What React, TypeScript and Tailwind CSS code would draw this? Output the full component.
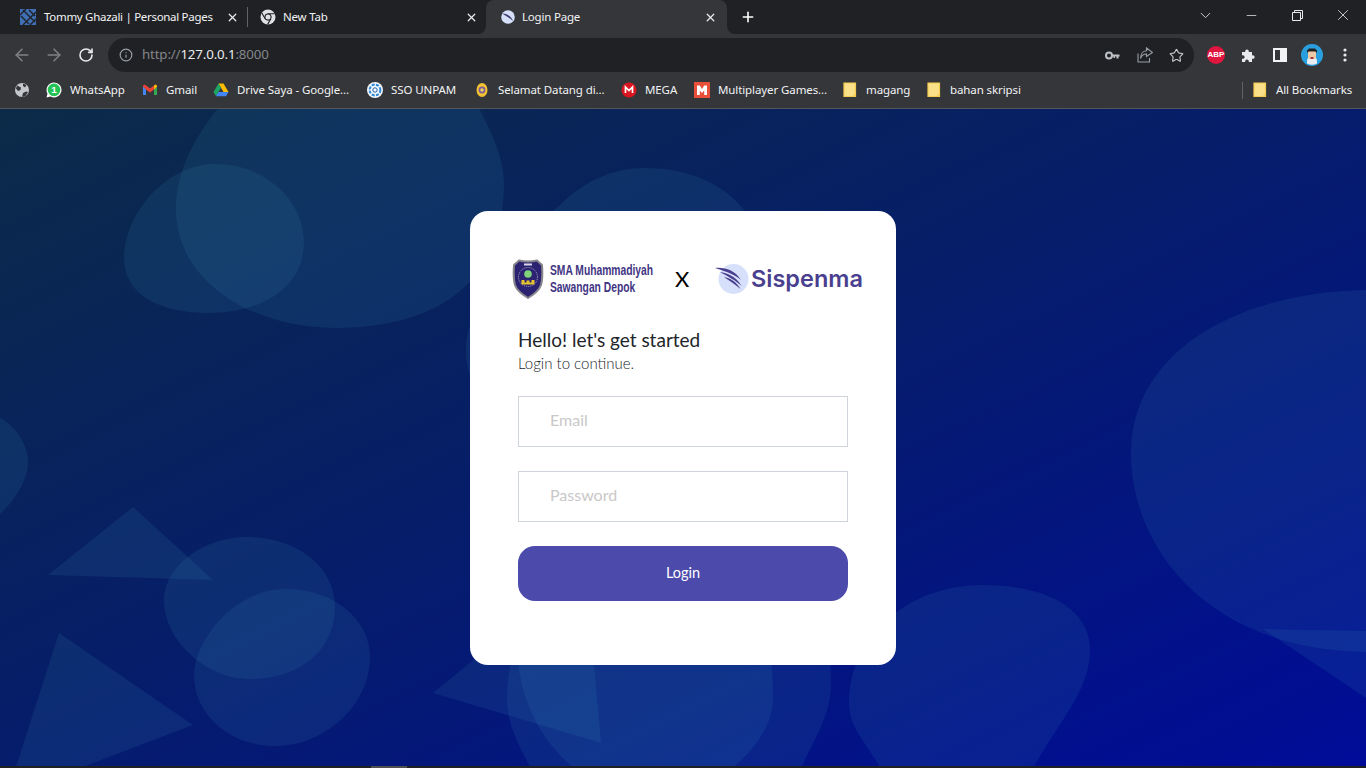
import React from "react";
import { ArrowLeft, ArrowRight, RotateCw, Info, Star, X, Plus, ChevronDown, Minus } from "lucide-react";

const Sep = () => <div className="w-px h-5 bg-[#5f6368]" />;

function TommyIcon() {
  return (
    <svg width="16" height="16" viewBox="0 0 16 16">
      <rect width="16" height="16" fill="#3f6fb5" />
      <path d="M0 6L6 0M3 16L16 3M10 16L16 10M3 1L15 13M9 1L15 7M1 7L9 15" stroke="#20242c" strokeWidth="1.5" />
    </svg>
  );
}
function ChromeIcon() {
  return (
    <svg width="16" height="16" viewBox="0 0 16 16">
      <circle cx="8" cy="8" r="7.5" fill="#dfe1e5" />
      <path d="M8 4.7h6.6M5.1 9.7L1.9 4.1M10.9 9.7L7.6 15.4" stroke="#202124" strokeWidth="1.1" />
      <circle cx="8" cy="8" r="3.2" fill="#202124" stroke="#202124" />
      <circle cx="8" cy="8" r="2.5" fill="#dfe1e5" />
    </svg>
  );
}
function WingFavicon() {
  return (
    <svg width="14" height="14" viewBox="0 0 14 14">
      <circle cx="7" cy="7" r="6.8" fill="#d6e0fb" />
      <path d="M1 3.5C5 3 10 6 12 11C9 8 5 6 1 3.5Z" fill="#3f3d6e" />
    </svg>
  );
}
function WhatsApp() {
  return (
    <svg width="18" height="18" viewBox="0 0 17 17">
      <path d="M8.5.4a8 8 0 0 0-6.900 12L.5 16.600l4.300-1.100A8 8 0 1 0 8.500.4Z" fill="#fff" />
      <circle cx="8.500" cy="8.400" r="6.700" fill="#25c256" />
      <text x="8.500" y="12.200" textAnchor="middle" fontSize="10.500" fontWeight="700" fill="#fff" fontFamily="Liberation Sans, sans-serif">1</text>
    </svg>
  );
}
function Gmail() {
  return (
    <svg width="16" height="16" viewBox="0 0 16 16">
      <path d="M1 4v9h3V7.500z" fill="#4285f4" />
      <path d="M12 7.500V13h3V4z" fill="#34a853" />
      <path d="M1 4.500C1 2.800 2.600 2.300 3.700 3.200L8 6.500l4.300-3.300c1.100-.9 2.700-.4 2.700 1.300l-3 3L8 10.500 4 7.500z" fill="#ea4335" />
      <path d="M12 7.500l3-3C15 2.800 13.400 2.300 12.300 3.200L12 3.500z" fill="#fbbc04" />
    </svg>
  );
}
function Drive() {
  return (
    <svg width="16" height="16" viewBox="0 0 16 16">
      <path d="M5.500 1.500h5L15.500 10h-5z" fill="#fbbc04" />
      <path d="M5.500 1.500L.5 10 3 14.300 8 5.800z" fill="#1fa463" />
      <path d="M3 14.300h10L15.500 10H5.500z" fill="#4285f4" />
    </svg>
  );
}
function Sso() {
  return (
    <svg width="16" height="16" viewBox="0 0 16 16">
      <circle cx="8" cy="8" r="8" fill="#f3f7fc" />
      <circle cx="8" cy="8" r="5.400" fill="none" stroke="#2c86d6" strokeWidth="2" strokeDasharray="3 1.300" />
      <circle cx="8" cy="8" r="2.200" fill="#fff" stroke="#1b5fa8" />
    </svg>
  );
}
function Selamat() {
  return (
    <svg width="16" height="16" viewBox="0 0 16 16">
      <ellipse cx="8" cy="8" rx="5.500" ry="7" fill="#f2c230" />
      <circle cx="8" cy="8" r="3.400" fill="#7d5a9e" />
      <circle cx="8" cy="8" r="1.800" fill="#e9d25a" />
    </svg>
  );
}
function Mega() {
  return (
    <svg width="16" height="16" viewBox="0 0 16 16">
      <circle cx="8" cy="8" r="7.500" fill="#d9161f" />
      <path d="M4.500 11V5l3.500 3.500L11.500 5v6" fill="none" stroke="#fff" strokeWidth="1.700" />
    </svg>
  );
}
function Multi() {
  return (
    <svg width="16" height="16" viewBox="0 0 16 16">
      <rect width="16" height="16" fill="#e8503a" />
      <path d="M3 3.500h2.800L8 7l2.200-3.500H13V13h-2.800V8.500L8 11 5.800 8.500V13H3z" fill="#fff" />
    </svg>
  );
}
function Note() {
  return (
    <svg width="14" height="16" viewBox="0 0 14 16">
      <path d="M1 1h11.500v13.500H1z" fill="#fbe08a" stroke="#f6cc4e" strokeWidth="1.200" />
      <rect x="10.500" y="12.500" width="2.500" height="2.500" fill="#f6cc4e" />
    </svg>
  );
}
function GlobeIcon() {
  return (
    <svg width="16" height="16" viewBox="0 0 16 16">
      <circle cx="8" cy="8" r="7" fill="#c4c7cc" />
      <path d="M3 3.500L7 5.500 6.500 8 4 9 2 6.500ZM8 15l1-4 3-1.500 2 .5-2.500 4ZM9 1.500L12.500 3 11 5.500 9 4Z" fill="#35363a" />
    </svg>
  );
}

function Tab({ icon, title, w, active }: { icon: React.ReactNode; title: string; w: string; active?: boolean }) {
  return (
    <div className={`${w} h-full flex items-center shrink-0 ${active ? "pl-[14px] pr-[10px]" : "pl-[20px] pr-[8px]"}`}>
      <span className="w-4 flex justify-center shrink-0">{icon}</span>
      <span className={`${active ? "ml-[6px] tracking-[-0.2px]" : "ml-2 tracking-[-0.3px]"} flex-1 whitespace-nowrap text-[11.5px] text-[#f1f3f4] [font-family:'Noto_Sans',sans-serif]`}>{title}</span>
      <X size={13} strokeWidth={2.4} className="text-[#e8eaed] shrink-0" />
    </div>
  );
}

const bookmarks: { w: string; icon: React.ReactNode; label: string }[] = [
  { w: "w-[96px]", icon: <WhatsApp />, label: "WhatsApp" },
  { w: "w-[71px]", icon: <Gmail />, label: "Gmail" },
  { w: "w-[154px]", icon: <Drive />, label: "Drive Saya - Google..." },
  { w: "w-[107px]", icon: <Sso />, label: "SSO UNPAM" },
  { w: "w-[147px]", icon: <Selamat />, label: "Selamat Datang di..." },
  { w: "w-[73px]", icon: <Mega />, label: "MEGA" },
  { w: "w-[148px]", icon: <Multi />, label: "Multiplayer Games..." },
  { w: "w-[84px]", icon: <Note />, label: "magang" },
  { w: "w-[110px]", icon: <Note />, label: "bahan skripsi" },
];

function Background() {
  const f = { fill: "rgb(60,150,185)", fillOpacity: 0.13 };
  return (
    <svg className="absolute inset-0 w-full h-full" viewBox="0 109 1366 657" preserveAspectRatio="none">
      <path {...f} d="M225 100C195 135 176 170 176 210C176 280 250 328 335 328C400 328 450 310 480 270C495 250 504 215 504 185C504 155 490 130 475 100Z" />
      <path {...f} d="M124 258C124 215 165 164 215 164C265 164 304 200 304 243C304 285 265 313 208 313C160 313 124 295 124 258Z" />
      <path {...f} d="M466 350C466 300 520 240 560 205C585 180 615 168 645 168C690 168 725 185 745 211C800 280 800 420 700 450C600 470 466 440 466 350Z" />
      <path {...f} d="M0 418C15 425 28 445 28 462C28 480 15 500 0 514Z" />
      <path {...f} d="M133 507L48 575L213 580Z" />
      <path {...f} d="M59 633L193 725L75 770L15 770Z" />
      <path {...f} d="M164 600C164 565 205 537 247 537C295 537 335 565 335 607C335 650 300 679 250 679C205 679 164 640 164 600Z" />
      <path {...f} d="M194 675C194 640 235 589 285 589C335 589 370 620 370 657C370 705 325 746 275 746C230 746 194 715 194 675Z" />
      <path {...f} d="M433 693L601 743L590 620L510 630Z" />
      <path {...f} d="M532 770C515 740 507 720 507 700C507 680 510 665 515 640L770 640C772 670 773 685 773 698C773 725 755 750 730 770Z" />
      <path {...f} d="M516 640C518 700 540 740 576 770L800 770C820 730 831 710 831 685C831 670 830 660 828 640Z" />
      <path {...f} d="M882 770C860 735 849 725 849 703C849 640 905 585 982 585C1050 585 1090 610 1090 650C1090 690 1060 720 1032 770Z" />
      <path {...f} d="M1366 290C1240 292 1131 350 1131 453C1131 550 1210 650 1366 652Z" />
      <path {...f} d="M1263 629L1366 631L1366 698Z" />
    </svg>
  );
}

function Shield() {
  return (
    <svg width="32" height="41" viewBox="0 0 32 41" className="shrink-0">
      <path d="M2 7L7 2.500C12 3.500 20 3.500 25 2.500L30 7C30.500 14 30.500 22 29 27C27 33 21 37 16 40C11 37 5 33 3 27C1.500 22 1.500 14 2 7Z" fill="#2b2272" stroke="#85858a" strokeWidth="2" />
      <circle cx="16" cy="19" r="9.500" fill="none" stroke="#c9c8dc" strokeWidth="0.800" strokeDasharray="1 1" />
      <circle cx="16" cy="16" r="3.800" fill="#7fd47a" />
      <path d="M9.500 22h3v2.500h2v-2h3v2h2V22h3v4.500h-13z" fill="#e6c52e" />
      <path d="M12 5.500h8v2h-8z" fill="#d8d6e8" />
    </svg>
  );
}

function WingLogo() {
  return (
    <svg width="36" height="32" viewBox="0 0 36 32" className="shrink-0">
      <circle cx="18.500" cy="16" r="15" fill="#d6e0fb" />
      <path d="M0 5C9 4 20 7 26 17C21 12.500 13 9 0 5Z" fill="#4a3f8f" />
      <path d="M5 9C12 10 21 13 26.500 23C21 17.500 13 13.500 5 9Z" fill="#4a3f8f" />
      <path d="M9 14C15 15 21 18 25.500 26C20 21.500 15 18 9 14Z" fill="#4a3f8f" />
    </svg>
  );
}

export default function App() {
  return (
    <div className="w-[1366px] h-[768px] flex flex-col overflow-hidden bg-[#202124]">
      {/* tab strip */}
      <div className="h-[34px] flex bg-[#35363a] shrink-0">
        <div className="w-[486px] h-full flex items-center bg-[#202124] rounded-br-lg">
          <div className="w-[247px] h-full"><Tab w="w-[247px]" icon={<TommyIcon />} title="Tommy Ghazali | Personal Pages" /></div>
          <Sep />
          <div className="flex-1 h-full flex items-center pl-[12px] pr-[8px]">
            <ChromeIcon />
            <span className="ml-[7px] flex-1 text-[11.5px] tracking-[-0.2px] text-[#f1f3f4] [font-family:'Noto_Sans',sans-serif]">New Tab</span>
            <X size={13} strokeWidth={2.4} className="text-[#e8eaed]" />
          </div>
        </div>
        <div className="w-[241px] h-full bg-[#202124]">
          <div className="w-full h-full bg-[#35363a] rounded-t-lg">
            <Tab w="w-[241px]" active icon={<WingFavicon />} title="Login Page" />
          </div>
        </div>
        <div className="flex-1 h-full flex items-center bg-[#202124] rounded-bl-lg">
          <Plus size={16} strokeWidth={2.4} className="ml-[13px] text-white" />
          <div className="flex-1" />
          <div className="h-full flex text-[#e8eaed]">
            <span className="w-[46px] h-[30px] flex items-center justify-center"><ChevronDown size={17} strokeWidth={1.2} /></span>
            <span className="w-[46px] h-[30px] flex items-center justify-center"><Minus size={15} strokeWidth={1.2} /></span>
            <span className="w-[46px] h-[30px] flex items-center justify-center">
              <svg width="11" height="11" viewBox="0 0 11 11" fill="none" stroke="currentColor"><path d="M.5 2.500h8v8h-8zM2.500 2.500V.5h8v8h-2" /></svg>
            </span>
            <span className="w-[46px] h-[30px] flex items-center justify-center"><X size={18} strokeWidth={1.1} /></span>
          </div>
        </div>
      </div>

      {/* toolbar */}
      <div className="h-[38px] bg-[#35363a] flex items-end shrink-0">
        <div className="w-[108px] h-[34px] flex items-center text-[#7f8185]">
          <ArrowLeft size={20} strokeWidth={1.8} className="ml-[12px]" />
          <ArrowRight size={20} strokeWidth={1.8} className="ml-[12px]" />
          <RotateCw size={16} strokeWidth={2.4} className="ml-[14px] text-[#e8eaed]" />
        </div>
        <div className="w-[1086px] h-[34px] bg-[#202124] rounded-full flex items-center">
          <Info size={14} strokeWidth={2} className="ml-[11px] text-[#9aa0a6]" />
          <div className="ml-[9px] flex-1 text-[13.3px] tracking-[-0.15px] [font-family:'Noto_Sans',sans-serif] text-[#84878b]">
            http://<span className="text-[#e8eaed]">127.0.0.1</span>:8000
          </div>
          <svg width="15" height="9" viewBox="0 0 15 9" className="text-[#bdc1c6]">
            <circle cx="4" cy="4.500" r="3" fill="none" stroke="currentColor" strokeWidth="2" />
            <path d="M6.500 3.500H14.500V5.500H13.500V7.500H11.500V5.500H10V7H8.500V5.500H6.500Z" fill="currentColor" />
          </svg>
          <svg width="16" height="16" viewBox="0 0 16 16" fill="none" stroke="#9aa0a6" strokeWidth="1.100" className="ml-[17px]">
            <path d="M1 6.500V15H12.500V11" />
            <path d="M9.500 1L15.500 5.500L9.500 9.500V7C6.500 7 4.500 8.500 3.500 11.500C3.500 7 6 4 9.500 3.800Z" />
          </svg>
          <Star size={15} strokeWidth={1.800} className="ml-[16px] mr-[10px] text-[#c4c7cc]" />
        </div>
        <div className="flex-1 h-[34px] flex items-center">
          <span className="ml-[13px] w-[18px] h-[18px] rounded-full bg-[#e0163f] flex items-center justify-center text-[8px] font-bold text-white [font-family:'Liberation_Sans',sans-serif]">ABP</span>
          <svg width="16" height="16" viewBox="0 0 16 16" className="ml-[16px]">
            <path d="M1 5h3.200C3.500 1.500 8.500 1.500 7.800 5H11v3.200C14.500 7.500 14.500 12.500 11 11.800V15H7.800C8.500 11.500 3.500 11.500 4.200 15H1v-3.200C4.500 12.500 4.500 7.500 1 8.200Z" fill="#e8eaed" />
          </svg>
          <svg width="14" height="14" viewBox="0 0 14 14" className="ml-[16px]">
            <path d="M0 0h14v14H0zM2 2v10h5V2z" fill="#f1f3f4" fillRule="evenodd" />
          </svg>
          <svg width="22" height="22" viewBox="0 0 22 22" className="ml-[14px]">
            <circle cx="11" cy="11" r="11" fill="#2a9fe0" />
            <path d="M6 17a5 5 0 0 1 10 0v2.500A11 11 0 0 1 6 19.500Z" fill="#e8edf0" />
            <rect x="7" y="6" width="8" height="9" rx="2" fill="#eec9a5" />
            <path d="M6 9V6.500L8 4.500h6L16 6.500V9L14.500 7.500h-7z" fill="#222" />
            <path d="M9.500 13h3v2h-3z" fill="#a33" />
          </svg>
          <svg width="4" height="14" viewBox="0 0 4 14" className="ml-[20px]" fill="#e8eaed">
            <circle cx="2" cy="2" r="1.600" /><circle cx="2" cy="7" r="1.600" /><circle cx="2" cy="12" r="1.600" />
          </svg>
        </div>
      </div>

      {/* bookmarks */}
      <div className="h-[37px] bg-[#35363a] border-b border-[#55565a] flex items-center shrink-0 text-[11.5px] tracking-[-0.1px] text-[#f1f3f4] [font-family:'Noto_Sans',sans-serif]">
        <span className="ml-[14px] w-[32px] shrink-0"><GlobeIcon /></span>
        {bookmarks.map((b) => (
          <div key={b.label} className={`${b.w} shrink-0 flex items-center`}>
            <span className="w-4 flex justify-center shrink-0">{b.icon}</span>
            <span className="ml-2 whitespace-nowrap">{b.label}</span>
          </div>
        ))}
        <div className="flex-1" />
        <div className="mr-[9px] w-px h-[17px] bg-[#5f6368]" />
        <div className="w-[114px] shrink-0 flex items-center">
          <span className="w-4 flex justify-center"><Note /></span>
          <span className="ml-2 whitespace-nowrap">All Bookmarks</span>
        </div>
      </div>

      {/* page */}
      <div className="relative flex-1 flex items-center justify-center bg-[linear-gradient(to_bottom_right,#0b2b48,#061e68_45%,#000c98)] overflow-hidden">
        <Background />
        <div className="relative w-[426px] h-[454px] bg-white rounded-[18px] pt-[47px] px-[48px] [font-family:Lato,sans-serif]">
          <div className="h-[42px] -ml-[6px] -mr-[20px] flex items-center">
            <Shield />
            <div className="ml-[6px] w-[110px] shrink-0 text-[14px] leading-[17px] font-bold text-[#3f3583] [font-family:'Liberation_Sans',sans-serif] whitespace-nowrap">
              <div className="origin-left scale-x-[0.735]">SMA Muhammadiyah</div>
              <div className="origin-left scale-x-[0.735]">Sawangan Depok</div>
            </div>
            <span className="ml-[15px] w-[17px] shrink-0 text-[22px] leading-none text-black">X</span>
            <span className="ml-[23px] flex shrink-0"><WingLogo /></span>
            <span className="shrink-0 text-[23.5px] font-semibold text-[#4a3f8f] [font-family:Inter,sans-serif] leading-none">Sispenma</span>
          </div>
          <h4 className="mt-[29px] text-[19px] leading-[22px] text-[#212529]">Hello! let's get started</h4>
          <p className="mt-[2px] text-[15px] leading-[20px] font-light text-[#212529]">Login to continue.</p>
          <input
            placeholder="Email"
            className="mt-[23px] block w-[330px] h-[51px] border border-[#ced4da] pl-[31px] pb-[3px] text-[16px] outline-none placeholder:text-[#c9c8c8]"
          />
          <input
            placeholder="Password"
            className="mt-[24px] block w-[330px] h-[51px] border border-[#ced4da] pl-[31px] pb-[3px] text-[16px] outline-none placeholder:text-[#c9c8c8]"
          />
          <button className="mt-[24px] block w-[330px] h-[55px] rounded-[17px] bg-[#4c4aab] text-white text-[14.500px]">Login</button>
        </div>
      </div>

      {/* bottom strip */}
      <div className="h-[2px] shrink-0 bg-[#202124] flex">
        <div className="ml-[371px] w-[36px] h-full bg-[#505050]" />
      </div>
    </div>
  );
}
